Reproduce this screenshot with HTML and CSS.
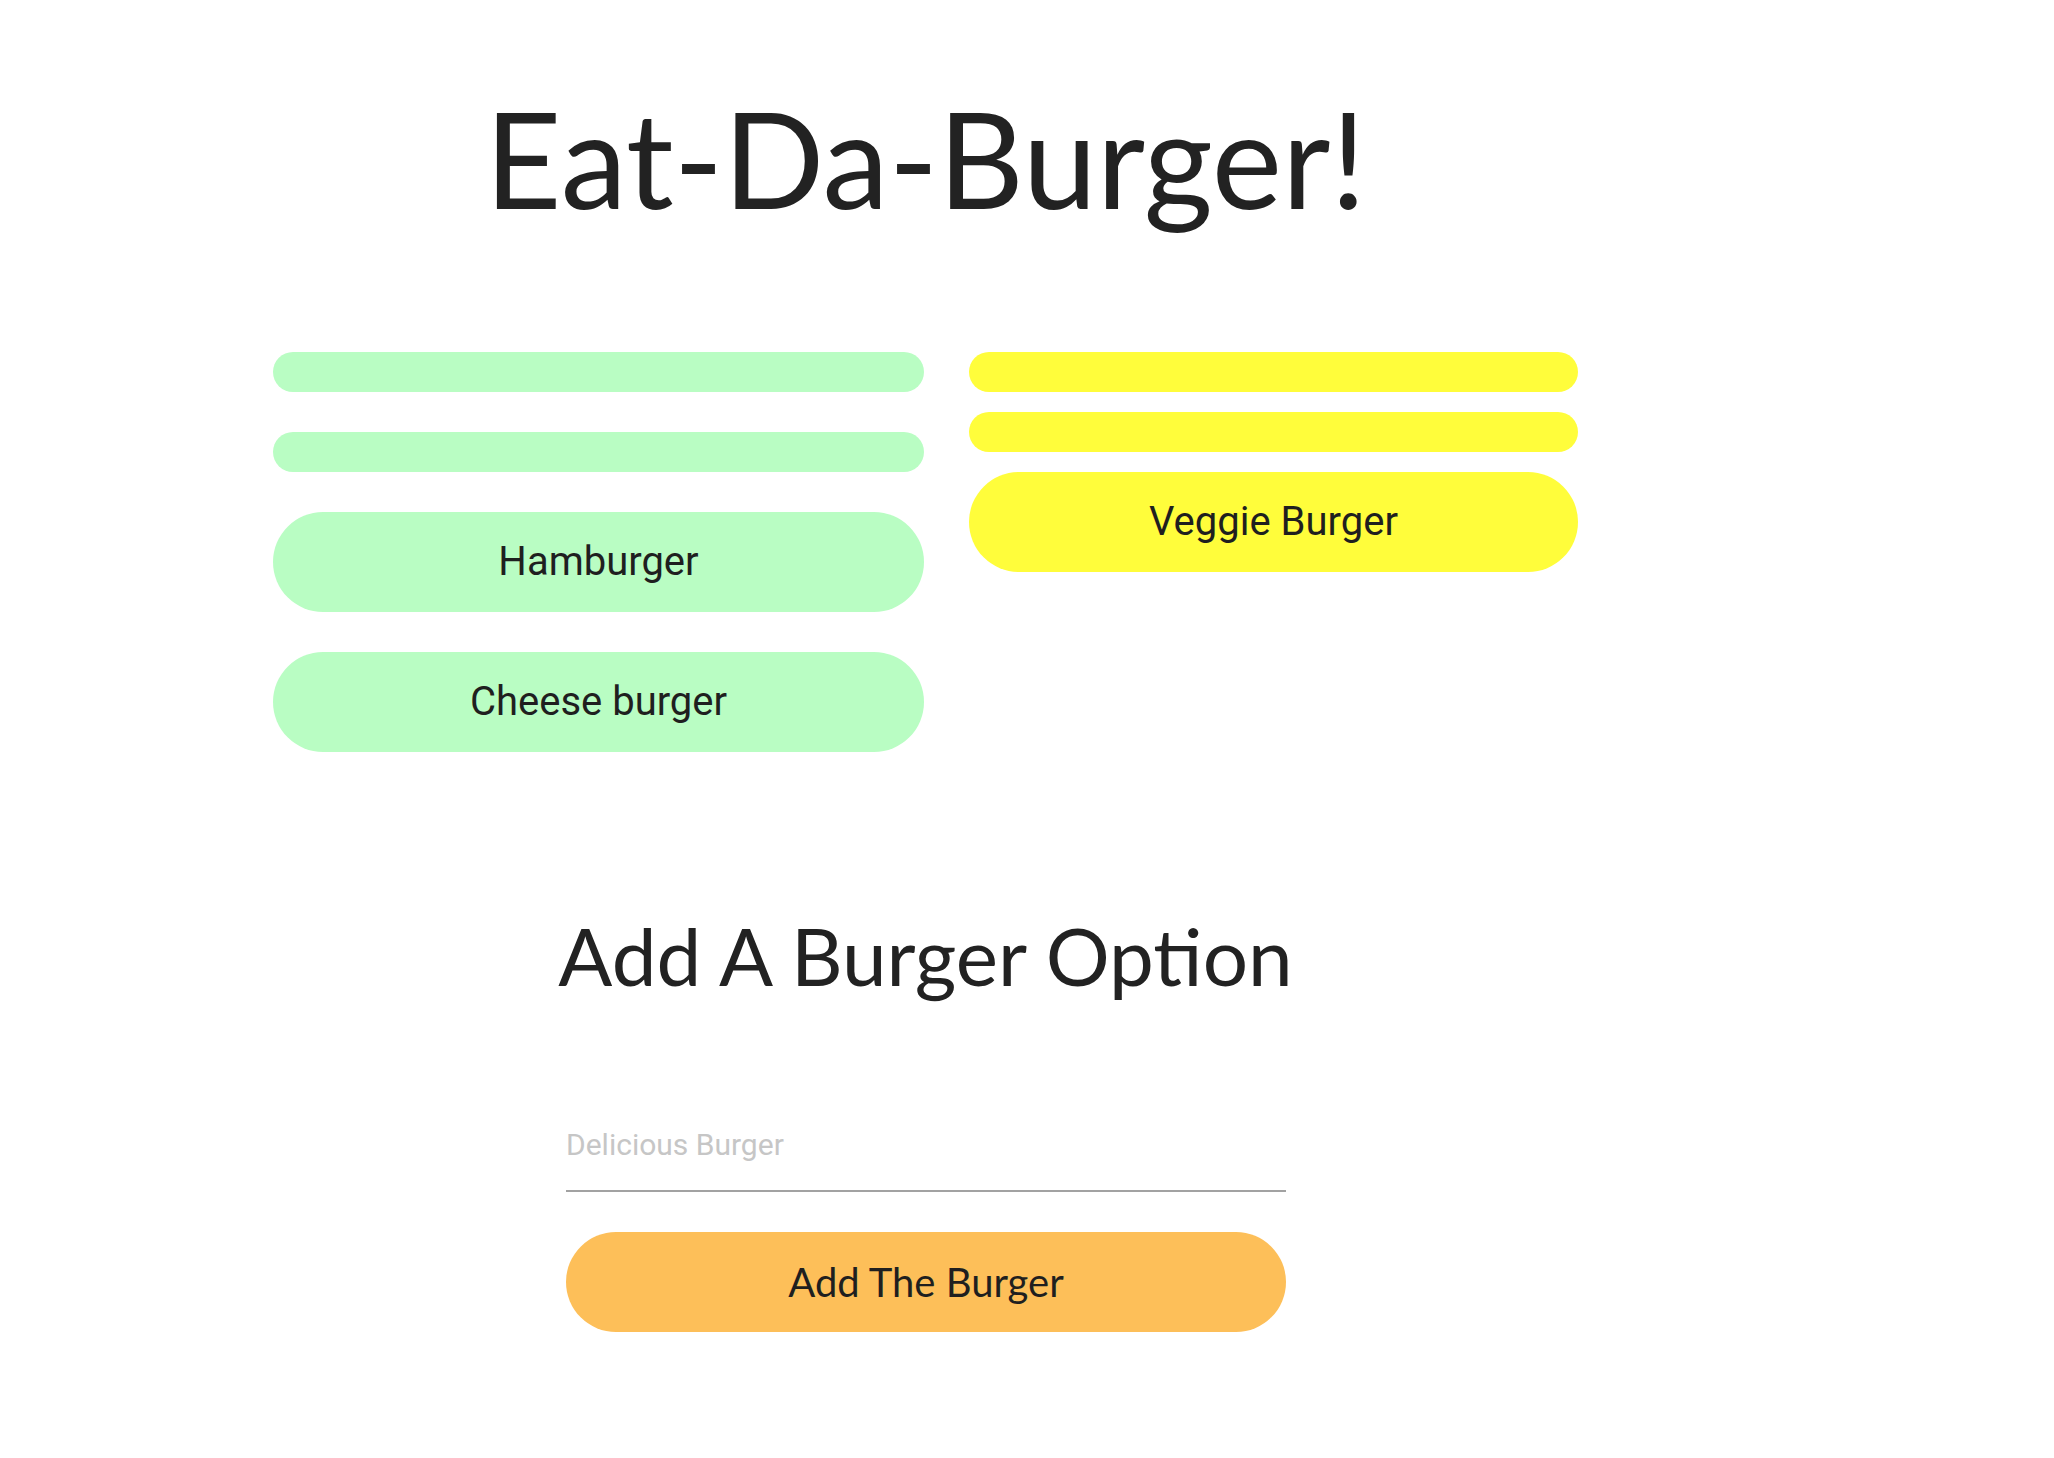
FILE: index.html
```html
<!DOCTYPE html>
<html lang="en">
<head>
<meta charset="utf-8">
<title>Eat-Da-Burger!</title>
<link rel="stylesheet" href="styles.css">
</head>
<body>
<main class="page">
  <h1 class="title">Eat-Da-Burger!</h1>
  <section class="menus">
    <div class="column column-eaten">
      <div class="bar bar-green"></div>
      <div class="bar bar-green"></div>
      <button class="pill pill-green" type="button">Hamburger</button>
      <button class="pill pill-green" type="button">Cheese burger</button>
    </div>
    <div class="column column-ready">
      <div class="bar bar-yellow"></div>
      <div class="bar bar-yellow"></div>
      <button class="pill pill-yellow" type="button">Veggie Burger</button>
    </div>
  </section>
  <h2 class="subtitle">Add A Burger Option</h2>
  <form class="add-form">
    <input class="burger-input" type="text" placeholder="Delicious Burger">
    <button class="add-button" type="button">Add The Burger</button>
  </form>
</main>
</body>
</html>
```

FILE: styles.css
```css
html, body {
  margin: 0;
  padding: 0;
  background: #ffffff;
}

body {
  font-family: "Lato", "Liberation Sans", sans-serif;
  color: #222222;
}

.page {
  width: 1305px;
  margin-left: 273px;
  display: flex;
  flex-direction: column;
  align-items: center;
  padding-bottom: 126px;
}

.title {
  margin: 80px 0 0;
  font-family: "Lato", sans-serif;
  font-weight: 400;
  font-size: 133px;
  line-height: 156px;
  color: #222222;
}

.menus {
  margin-top: 116px;
  width: 100%;
  display: grid;
  grid-template-columns: 651px 609px;
  column-gap: 45px;
  align-items: start;
}

.column {
  display: flex;
  flex-direction: column;
}

.column-eaten {
  gap: 40px;
}

.column-ready {
  gap: 20px;
}

.bar {
  height: 40px;
  border-radius: 20px;
}

.bar-green, .pill-green {
  background: #b9fdc3;
}

.bar-yellow, .pill-yellow {
  background: #fffd3b;
}

.pill {
  display: block;
  width: 100%;
  height: 100px;
  border: none;
  border-radius: 50px;
  padding: 0;
  font-family: "Roboto", sans-serif;
  font-size: 40px;
  line-height: 100px;
  color: #1f1f1f;
  text-align: center;
  cursor: pointer;
}

.subtitle {
  margin: 155px 0 0;
  font-family: "Lato", sans-serif;
  font-weight: 400;
  font-size: 80px;
  line-height: 96px;
  color: #222222;
}

.add-form {
  width: 720px;
  margin-top: 121px;
  margin-left: 1px;
  display: flex;
  flex-direction: column;
}

.burger-input {
  display: block;
  width: 100%;
  box-sizing: border-box;
  height: 68px;
  padding: 0 0 26px;
  border: none;
  border-bottom: 2px solid #a2a2a2;
  background: transparent;
  font-family: "Roboto", sans-serif;
  font-size: 30px;
  line-height: 40px;
  color: #222222;
  outline: none;
}

.burger-input::placeholder {
  color: #c6c6c6;
}

.add-button {
  margin-top: 40px;
  width: 100%;
  height: 100px;
  border: none;
  border-radius: 50px;
  padding: 0;
  background: #fdbf59;
  font-family: "Lato", sans-serif;
  font-size: 40px;
  line-height: 100px;
  color: #1f1f1f;
  cursor: pointer;
}
```
